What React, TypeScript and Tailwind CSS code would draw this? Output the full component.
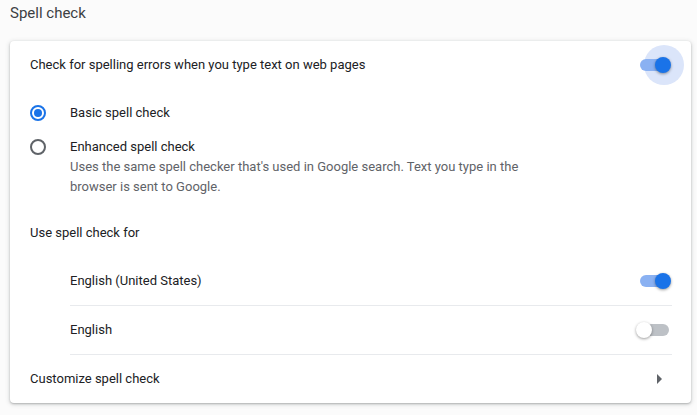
const Toggle = ({ on, halo = false }: { on: boolean; halo?: boolean }) => {
  return (
    <div className="relative w-[32px] h-[16px] shrink-0">
      {halo && (
        <div className="absolute left-[5px] top-[-12px] w-[40px] h-[40px] rounded-full bg-[#dbe5fa]" />
      )}
      <div
        className={
          on
            ? "absolute left-[1px] right-[2px] top-[2px] h-[12px] rounded-full bg-[#8ab1f2]"
            : "absolute left-[1px] right-[2px] top-[2px] h-[12px] rounded-full bg-[#bdc1c6]"
        }
      />
      <div
        className={
          on
            ? "absolute left-[16px] top-0 w-[16px] h-[16px] rounded-full bg-[#1a73e8] shadow-[0_1px_3px_rgba(0,0,0,0.4)]"
            : "absolute left-[-3px] top-0 w-[16px] h-[16px] rounded-full bg-white shadow-[0_1px_3px_rgba(0,0,0,0.4)]"
        }
      />
    </div>
  );
};

const Radio = ({ checked }: { checked: boolean }) => {
  return (
    <div
      className={
        checked
          ? "w-[16px] h-[16px] rounded-full border-2 border-[#1a73e8] flex items-center justify-center"
          : "w-[16px] h-[16px] rounded-full border-2 border-[#5f6368]"
      }
    >
      {checked && <div className="w-[8px] h-[8px] rounded-full bg-[#1a73e8]" />}
    </div>
  );
};

export default function App() {
  return (
    <div
      className="w-[697px] h-[415px] bg-[#fbfbfb] text-[#202124] text-[13px] overflow-hidden"
      style={{ fontFamily: "Roboto, 'Liberation Sans', sans-serif" }}
    >
      <div className="px-[10px] pt-[3px] h-[41px] text-[15px] leading-[20px] text-[#3c4043]">
        Spell check
      </div>
      <div className="mx-[10px] w-[681px] bg-white rounded-[4px] shadow-[0_1px_2px_rgba(60,64,67,0.3),0_1px_4px_1px_rgba(60,64,67,0.15)]">
        <div className="h-[48px] flex items-center justify-between pl-[20px] pr-[20px]">
          <span>Check for spelling errors when you type text on web pages</span>
          <Toggle on halo />
        </div>

        <div className="h-[47px] flex items-center pl-[20px]">
          <div className="w-[40px]">
            <Radio checked />
          </div>
          <span>Basic spell check</span>
        </div>

        <div className="flex pl-[20px] pt-[1px] leading-[20px]">
          <div className="w-[40px] pt-[2px]">
            <Radio checked={false} />
          </div>
          <div>
            <div>Enhanced spell check</div>
            <div className="text-[#5f6368]">
              Uses the same spell checker that's used in Google search. Text you type in the
              <br />
              browser is sent to Google.
            </div>
          </div>
        </div>

        <div className="pl-[20px] mt-[26px] leading-[20px]">Use spell check for</div>

        <div className="ml-[60px] mr-[19px] mt-[14px]">
          <div className="h-[49px] flex items-center justify-between border-b border-[#e8eaed] pr-[1px]">
            <span>English (United States)</span>
            <Toggle on />
          </div>
          <div className="h-[49px] flex items-center justify-between border-b border-[#e8eaed] pr-[1px]">
            <span>English</span>
            <Toggle on={false} />
          </div>
        </div>

        <div className="h-[48px] flex items-center justify-between pl-[20px] pr-[28px]">
          <span>Customize spell check</span>
          <svg width="6" height="10" viewBox="0 0 6 10">
            <polygon points="0,0 5,5 0,10" fill="#5f6368" />
          </svg>
        </div>
      </div>
    </div>
  );
}
